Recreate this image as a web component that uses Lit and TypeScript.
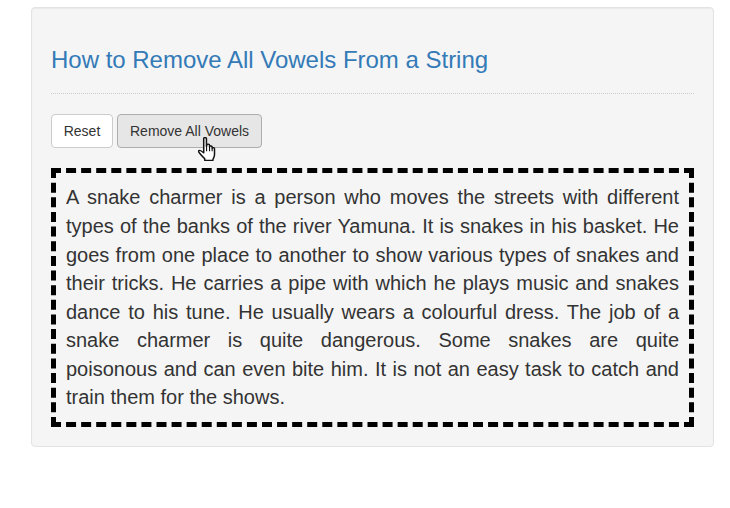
import { LitElement, html, css } from "lit";
import { customElement } from "lit/decorators.js";

@customElement("app-root")
export class AppRoot extends LitElement {
  static styles = css`
    :host { display: block; font-family: "Liberation Sans", Arial, sans-serif; color: #333; font-size: 14px; line-height: 1.42857; }
    .container { width: 683px; margin: 7px 0 0 31px; }
    .well { box-sizing: border-box; background: #f5f5f5; border: 1px solid #e3e3e3; border-radius: 4px; padding: 19px; box-shadow: inset 0 1px 1px rgba(0,0,0,.05); }
    .header { padding-bottom: 10px; margin-bottom: 20px; border-bottom: 1px dotted #ccc; padding-top: 20px; }
    h3 { margin: 0 0 10px; font-size: 24px; font-weight: 400; line-height: 1.1; letter-spacing: -0.01px; color: #337ab7; }
    .buttons { display: flex; gap: 4px; margin-bottom: 20px; }
    button { position: relative; font: inherit; height: 34px; padding: 7px 12px 5px; border: 1px solid #ccc; border-radius: 4px; background: #fff; color: #333; }
    button.reset { width: 62px; padding-left: 0; padding-right: 0; }
    button.active { background: #e6e6e6; border-color: #adadad; }
    .cursor { position: absolute; left: 80px; top: 22px; width: 18px; height: 24px; }
    .text { margin: 0; padding: 10px; border: 5px dashed #000; font-size: 20px; line-height: 28.57px; text-align: justify; color: #333; }
  `;
  render() {
    return html`<div class="container"><div class="well">
      <div class="header"><h3>How to Remove All Vowels From a String</h3></div>
      <div class="buttons">
        <button class="reset">Reset</button>
        <button class="active">Remove All Vowels
          <svg class="cursor" viewBox="1.4 .3 14.5 23" preserveAspectRatio="none"><path d="M6 1.8c0-1.300 2.200-1.300 2.200 0V9.500l.4-1.600c0-1.200 2.100-1.200 2.100.2v1.700c.1-1.200 2.100-1.200 2.100.2v1.200c.2-1 1.900-.9 1.900.4V17c0 2.200-.8 3.300-1.200 4.500v1.200H6.800v-1.600C5.600 19.500 4 18 2.500 15.500c-1-1.600-.9-2.500.3-2.500.9 0 2 1.200 3.200 2.500z" fill="#fff" stroke="#111" stroke-width="1.200" stroke-linejoin="round"/><path d="M8.300 9.500v4.500M10.700 10v4M12.800 11v3" stroke="#111" stroke-width=".9" fill="none"/></svg>
        </button>
      </div>
      <p class="text">A snake charmer is a person who moves the streets with different types of the banks of the river Yamuna. It is snakes in his basket. He goes from one place to another to show various types of snakes and their tricks. He carries a pipe with which he plays music and snakes dance to his tune. He usually wears a colourful dress. The job of a snake charmer is quite dangerous. Some snakes are quite poisonous and can even bite him. It is not an easy task to catch and train them for the shows.</p>
    </div></div>`;
  }
}
